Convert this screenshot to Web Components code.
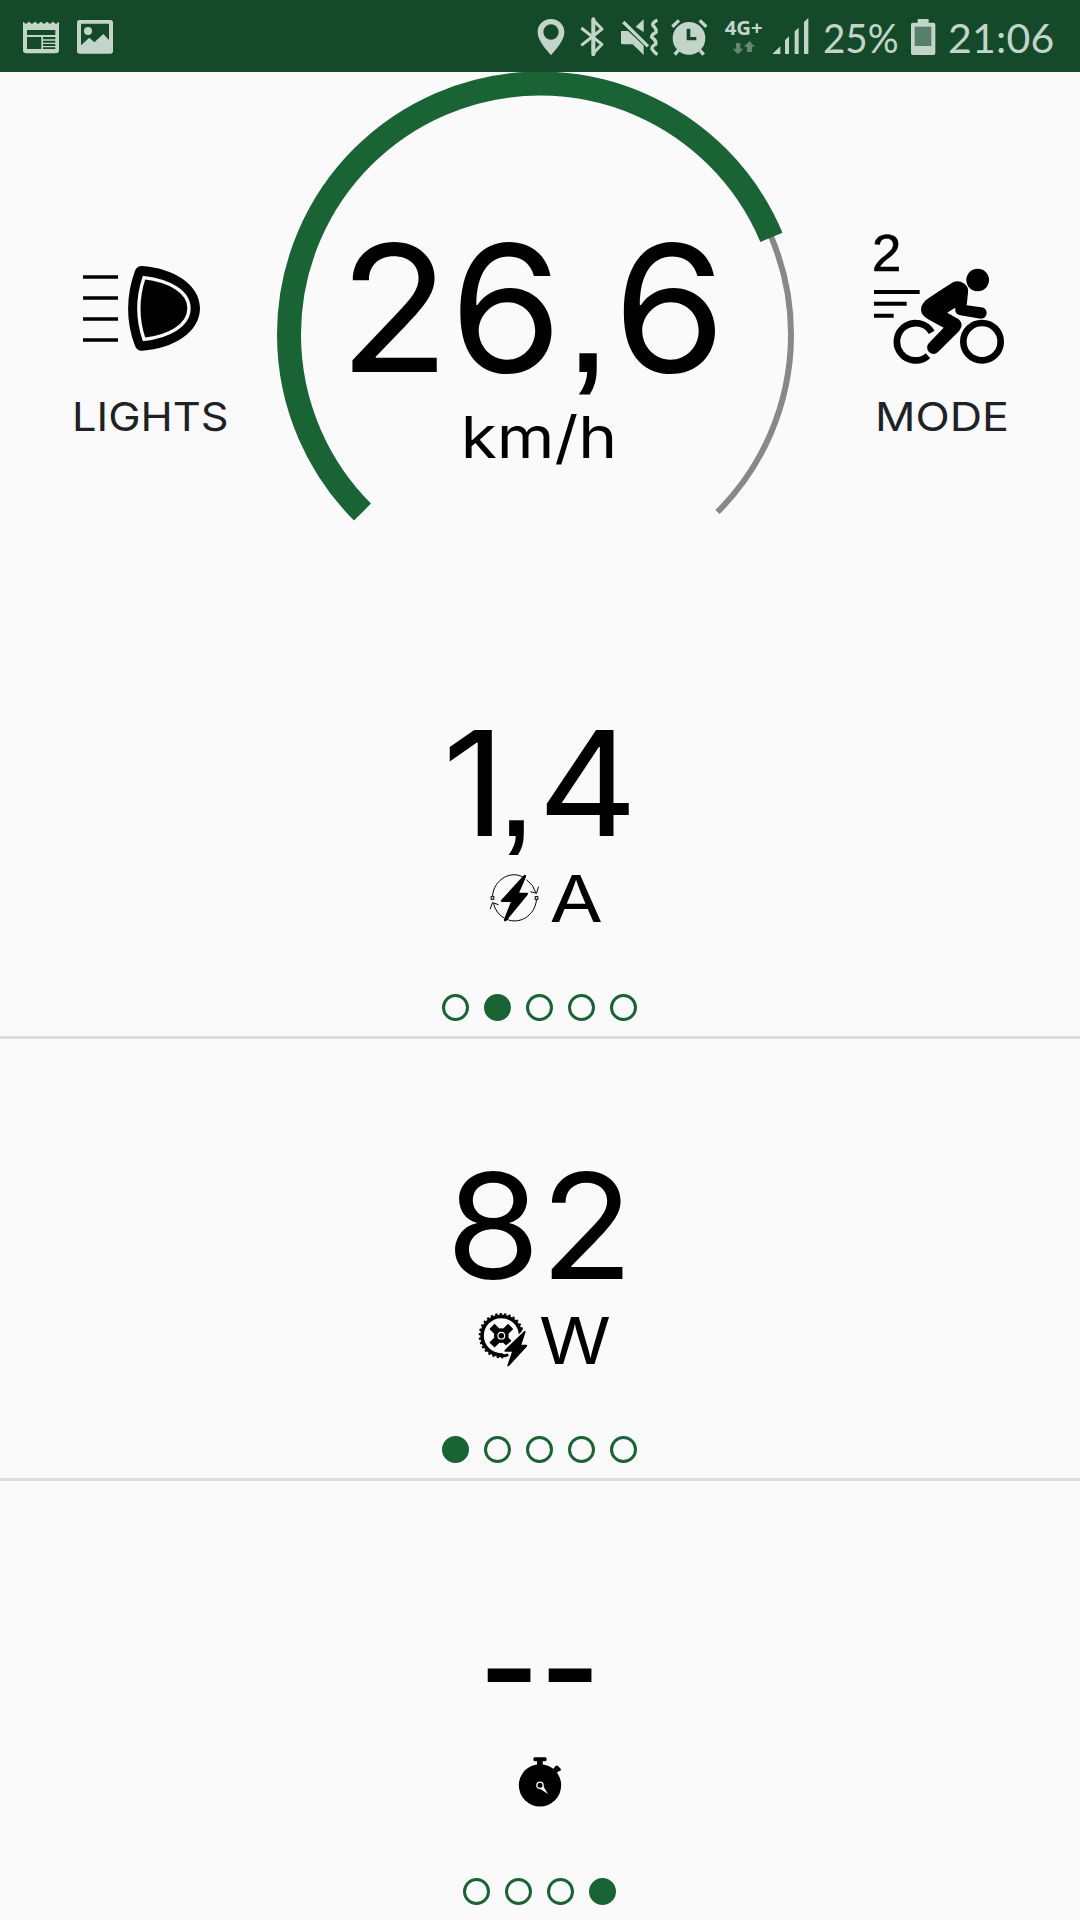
<!DOCTYPE html>
<html lang="en">
<head>
<meta charset="utf-8">
<title>Ride</title>
<style>
html, body {
	margin: 0;
	width: 1080px;
	height: 1920px;
	overflow: hidden;
	background: #fafafa;
	color: #000;
	font-family: Inter, "Liberation Sans", sans-serif;
}
</style>
</head>
<body>
<ride-screen></ride-screen>

<script>
const ICONS = {
	news: `<svg viewBox="69 0 108 216" width="36" height="72" fill="currentColor">
		<path fill-rule="evenodd" d="M69 65l9 7 9-7 9 7 9-7 9 7 9-7 9 7 9-7 9 7 9-7 9 7 9-7v85q0 10-10 10H79q-10 0-10-10zM81 90v15h85V90zM81 111v36h43v-36zM129 111v7h37v-7zM129 122v6h37v-6zM129 132v6h37v-6zM129 142v5h37v-5z"/></svg>`,
	image: `<svg viewBox="231 0 108 216" width="36" height="72" fill="currentColor">
		<path fill-rule="evenodd" d="M239 60h92q8 0 8 8v86q0 7-8 7h-92q-8 0-8-7V68q0-8 8-8zM243 71v65l25-23 15 14 27-25 17 18V71z"/>
		<circle cx="264" cy="93" r="12"/></svg>`,
	pin: `<svg viewBox="39 0 120 216" width="40" height="72" fill="currentColor">
		<path fill-rule="evenodd" d="M93 57c-23 0-40 17-40 39 0 25 22 48 40 70 18-22 40-45 40-70 0-22-17-39-40-39zm0 16a23 23 0 1 1 0 46 23 23 0 0 1 0-46z"/></svg>`,
	bluetooth: `<svg viewBox="159 0 120 216" width="40" height="72" fill="none" stroke="currentColor" stroke-width="9">
		<path d="M184 84l62 49-26 27V61l26 26-62 49" stroke-linejoin="round"/><path d="M220 58v105" stroke-width="12" stroke-linecap="round"/></svg>`,
	mute: `<svg viewBox="279 0 159 216" width="53" height="72" fill="currentColor">
		<path d="M347 80l24-22v39zM303 93h21l47 43v29l-33-32h-30q-5 0-5-5z"/>
		<path d="M310 66l74 73" stroke="#144a2a" stroke-width="15"/>
		<path d="M310 66l74 73" stroke="currentColor" stroke-width="10"/>
		<path d="M412 60q-20 11-11 19t7 18q-20 11-9 18t8 18q-16 8-9 17t14 14" fill="none" stroke="currentColor" stroke-width="10"/></svg>`,
	alarm: `<svg viewBox="438 0 141 216" width="47" height="72" fill="currentColor">
		<path fill-rule="evenodd" d="M507 66a49 49 0 1 1 0 98 49 49 0 0 1 0-98zM500 86v35h29v-10h-18V86z"/>
		<path d="M457 80l20-19M539 61l20 19M475 151l-11 13M540 151l11 13" stroke="currentColor" stroke-width="10"/></svg>`,
	network: `<svg viewBox="579 0 171 216" width="57" height="72" fill="currentColor">
		<text x="614" y="105" font-family="Open Sans, sans-serif" font-weight="700" font-size="61" textLength="114" lengthAdjust="spacingAndGlyphs">4G+</text>
		<path opacity=".45" d="M648 129h13v17h9l-16 17-16-17h10zM681 156V140h-9l16-17 17 17h-9v16z"/></svg>`,
	signal: `<svg viewBox="750 0 126 216" width="42" height="72" fill="currentColor">
		<path d="M757 162l24-23v23zM795 121l12-12v53h-12zM824 94l12-11v79h-12zM852 66l13-12v108h-13z"/></svg>`,
	battery: `<svg viewBox="375 0 108 216" width="36" height="72" fill="currentColor">
		<path d="M413 57h33v11h15q5 0 5 5v87q0 5-5 5h-63q-5 0-5-5V73q0-5 5-5h15z"/><path fill="#57806a" d="M404 80h50v58h-50z"/></svg>`,
	lights: `<svg viewBox="98 78 351 255" width="117" height="85">
		<path d="M98 111h105M98 174h105M98 237h105M98 300h105" stroke="#000" stroke-width="10"/>
		<path d="M274 78C370 84 449 134 449 205S370 326 276 332Q260 333 254 317C226 245 227 165 254 92Q260 78 274 78z"/>
		<path d="M281 113C354 122 416 153 416 205S354 290 281 298Q250 205 281 113z" fill="none" stroke="#fafafa" stroke-width="10"/></svg>`,
	mode: `<svg viewBox="60 6 402 426" width="134" height="142">
		<text x="66" y="153" font-family="Liberation Sans, sans-serif" font-size="158" stroke="#000" stroke-width="2">2</text>
		<path d="M72 216h137M72 251h98M72 287h59" stroke="#000" stroke-width="12"/>
		<g fill="none" stroke="#000" stroke-width="20">
			<circle cx="396" cy="365" r="56"/>
			<path d="M245 337a56 56 0 1 0-11 70"/>
		</g>
		<circle cx="383" cy="180" r="34"/>
		<path d="M310 186q17-6 33 5 14 10 11 28l-4 37 43 6q17 2 17 17-1 17-18 17l-65-11q-13-4-11-21l-24 14 33 19q19 14 3 35l-64 64q-14 12-27 0-12-14 0-27l44-46-48-26q-37-23-6-56 11-9 83-55z"/>
		<path d="M293 278l20-13q1 12 7 18l-5 7z" fill="#fafafa"/></svg>`,
	current: `<svg viewBox="36 33 162 162" width="54" height="54">
		<g fill="none" stroke="#000" stroke-width="3">
			<path d="M51 108C55 57 110 27 148 55M153 59Q175 76 181 98M183 119C178 168 132 194 94 178M86 174Q61 160 54 130"/>
			<path d="M165 95l18 5 6-20M44 147l7-19 18 6"/>
			<rect x="47" y="110" width="8" height="8"/><rect x="179" y="110" width="8" height="8"/>
		</g>
		<path d="M145 46q3-3 6 0 2 2 0 6l-20 46h23q6 1 2 7l-63 77q-4 3-7 0-2-2 0-6l20-50H79q-5-1-2-6z"/></svg>`,
	power: `<svg viewBox="19 39 162 162" width="54" height="54">
		<g fill="none" stroke="#000">
			<circle cx="95" cy="107" r="58" stroke-width="11"/>
			<circle cx="95" cy="107" r="65" stroke-width="6" pathLength="360" stroke-dasharray="6 6"/>
			<path d="M67 79l56 56M123 79l-56 56" stroke-width="22"/>
		</g>
		<circle cx="95" cy="107" r="22"/>
		<circle cx="95" cy="107" r="10" fill="none" stroke="#fafafa" stroke-width="3.500"/>
		<path d="M160 90l-20 20-50 42 17 15 4 38 75-60-10-20z" fill="#fafafa"/>
		<path d="M116 164q-14 5-27 3" fill="none" stroke="#000" stroke-width="8"/>
		<path d="M164 93q4-1 4 3l-13 38h16q4 2 0 6l-53 58q-4 3-5-2l14-41h-21q-4-2 0-6z"/></svg>`,
	timer: `<svg viewBox="189 345 162 162" width="54" height="54">
		<circle cx="270" cy="436" r="63.500"/>
		<path d="M254 352h32q4 0 4 6t-4 6h-8v14h-17v-14h-7q-4 0-4-6t4-6zM314 382q3-8 10-4l8 8q3 6-6 8l-5 4-12-11z"/>
		<circle cx="270" cy="436" r="9.500" fill="none" stroke="#fafafa" stroke-width="4"/>
		<path d="M271 447l9-8 14 23z" fill="#fafafa"/></svg>`
};

class RideIcon extends HTMLElement {
	connectedCallback() {
		this.attachShadow({mode: "open"}).innerHTML = `
			<style>
			:host { display: block; flex: none; }
			svg { display: block; }
			</style>
			${ICONS[this.getAttribute("name")]}`;
	}
}

class StatusBar extends HTMLElement {
	connectedCallback() {
		this.attachShadow({mode: "open"}).innerHTML = `
			<style>
			:host {
				display: flex;
				justify-content: space-between;
				height: 72px;
				background: #144a2a;
				color: #c3d5c9;
				font: 41px/76px Lato, "Liberation Sans", sans-serif;
				white-space: nowrap;
			}
			div { display: flex; }
			.left { gap: 18px; padding-left: 23px; }
			.battery { box-sizing: border-box; width: 93px; padding-left: 11px; }
			.battery span { display: inline-block; transform: scaleX(.94); transform-origin: left; }
			.time { box-sizing: border-box; width: 139px; padding-left: 7px; letter-spacing: .2px; }
			</style>
			<div class="left">
				<ride-icon name="news"></ride-icon>
				<ride-icon name="image"></ride-icon>
			</div>
			<div>
				<ride-icon name="pin"></ride-icon>
				<ride-icon name="bluetooth"></ride-icon>
				<ride-icon name="mute"></ride-icon>
				<ride-icon name="alarm"></ride-icon>
				<ride-icon name="network"></ride-icon>
				<ride-icon name="signal"></ride-icon>
				<div class="battery"><span>25%</span></div>
				<ride-icon name="battery"></ride-icon>
				<div class="time">21:06</div>
			</div>`;
	}
}

class SpeedGauge extends HTMLElement {
	connectedCallback() {
		// 270 degree dial that opens at the bottom
		const arc = "M85.500 440A251 251 0 1 1 440.500 440";
		const part = Number(this.getAttribute("fraction")) * 270;
		this.attachShadow({mode: "open"}).innerHTML = `
			<style>
			:host { display: grid; width: 526px; height: 525px; }
			svg, div { grid-area: 1 / 1; }
			div {
				display: flex;
				flex-direction: column;
				align-items: center;
				padding-top: 148px;
				line-height: 1;
				white-space: nowrap;
			}
			.value {
				height: 176px;
				font-size: 176px;
				font-weight: 370;
				transform: var(--value-transform);
			}
			.unit {
				margin-top: 12px;
				font-size: 58px;
				transform: var(--unit-transform);
			}
			</style>
			<svg width="526" height="526" fill="none">
				<path d="${arc}" stroke="#888" stroke-width="6"/>
				<path d="${arc}" stroke="#1a6335" stroke-width="24" pathLength="270" stroke-dasharray="${part} 400"/>
			</svg>
			<div>
				<span class="value"><slot></slot></span>
				<span class="unit"><slot name="unit"></slot></span>
			</div>`;
	}
}

class SideControl extends HTMLElement {
	connectedCallback() {
		this.attachShadow({mode: "open"}).innerHTML = `
			<style>
			:host {
				display: flex;
				flex-direction: column;
				align-items: flex-start;
				color: #202124;
				white-space: nowrap;
			}
			.icon {
				box-sizing: border-box;
				height: 325px;
				padding: var(--icon-pad);
			}
			.label {
				margin-left: var(--label-left);
				font-size: 40px;
				line-height: 40px;
				transform: scaleX(var(--stretch, 1));
				transform-origin: left;
			}
			</style>
			<div class="icon"><ride-icon name="${this.getAttribute("icon")}"></ride-icon></div>
			<span class="label"><slot></slot></span>`;
	}
}

class PageDots extends HTMLElement {
	connectedCallback() {
		const count = Number(this.getAttribute("count"));
		const current = Number(this.getAttribute("current"));
		let dots = "";
		for (let i = 1; i <= count; i++) {
			dots += i === current ? `<i class="on"></i>` : `<i></i>`;
		}
		this.attachShadow({mode: "open"}).innerHTML = `
			<style>
			:host { display: flex; gap: 15px; padding-right: 1px; }
			i {
				box-sizing: border-box;
				width: 27px;
				height: 27px;
				border: 3px solid #1a6335;
				border-radius: 50%;
			}
			.on { background: #1a6335; }
			</style>
			${dots}`;
	}
}

class DataPanel extends HTMLElement {
	connectedCallback() {
		this.attachShadow({mode: "open"}).innerHTML = `
			<style>
			:host {
				display: flex;
				flex: none;
				flex-direction: column;
				align-items: center;
				box-sizing: border-box;
				height: 442px;
				padding-top: 113px;
				border-bottom: 3px solid #dcdcdc;
				white-space: nowrap;
			}
			.value {
				height: 146px;
				font-size: 146px;
				font-weight: var(--value-weight, 380);
				line-height: 146px;
				transform: var(--value-transform);
			}
			.unit {
				display: flex;
				align-items: center;
				box-sizing: border-box;
				height: 64px;
				margin: 10px 0 64px;
				gap: var(--unit-gap, 0);
				font-size: 64px;
				font-weight: 370;
				line-height: 64px;
				transform: translateX(var(--unit-shift, 0));
			}
			::slotted([slot=unit]) {
				display: block;
				transform: translateY(1px) scaleX(var(--unit-stretch, 1));
				transform-origin: left;
			}
			</style>
			<span class="value"><slot></slot></span>
			<div class="unit">
				<ride-icon name="${this.getAttribute("icon")}"></ride-icon>
				<slot name="unit"></slot>
			</div>
			<page-dots count="${this.getAttribute("pages")}" current="${this.getAttribute("page")}"></page-dots>`;
	}
}

class RideScreen extends HTMLElement {
	connectedCallback() {
		this.attachShadow({mode: "open"}).innerHTML = `
			<style>
			:host {
				display: flex;
				flex-direction: column;
				height: 1920px;
				overflow: hidden;
			}
			.top {
				display: grid;
				grid-template-columns: 277px 526px 277px;
				height: 525px;
			}
			.comma { font-family: "Liberation Sans", sans-serif; line-height: 0; }
			.lights { --icon-pad: 194px 0 0 82.500px; --label-left: 72px; --stretch: 1.085; }
			.mode { --icon-pad: 150px 0 0 67px; --label-left: 72px; --stretch: 1.12; }
			speed-gauge {
				--value-transform: translateX(-8px) scaleX(1.034);
				--unit-transform: translateX(-1px) scaleX(1.135);
			}
			.current {
				--value-transform: scaleX(1.06);
				--unit-gap: 8px;
				--unit-shift: .5px;
				--unit-stretch: 1.21;
			}
			.current .comma { margin-left: -10px; }
			.power {
				--value-transform: translateY(1px) scaleX(1.045);
				--unit-gap: 9px;
				--unit-shift: -1px;
				--unit-stretch: 1.14;
			}
			.timer { --value-weight: 500; --value-transform: scaleX(.905); }
			</style>
			<status-bar></status-bar>
			<div class="top">
				<side-control class="lights" icon="lights">LIGHTS</side-control>
				<speed-gauge fraction="0.749">26<span class="comma">,</span>6<span slot="unit">km/h</span></speed-gauge>
				<side-control class="mode" icon="mode">MODE</side-control>
			</div>
			<data-panel class="current" icon="current" pages="5" page="2">1<span class="comma">,</span>4<span slot="unit">A</span></data-panel>
			<data-panel class="power" icon="power" pages="5" page="1">82<span slot="unit">W</span></data-panel>
			<data-panel class="timer" icon="timer" pages="4" page="4">--</data-panel>`;
	}
}

customElements.define("ride-icon", RideIcon);
customElements.define("status-bar", StatusBar);
customElements.define("speed-gauge", SpeedGauge);
customElements.define("side-control", SideControl);
customElements.define("page-dots", PageDots);
customElements.define("data-panel", DataPanel);
customElements.define("ride-screen", RideScreen);
</script>
</body>
</html>
